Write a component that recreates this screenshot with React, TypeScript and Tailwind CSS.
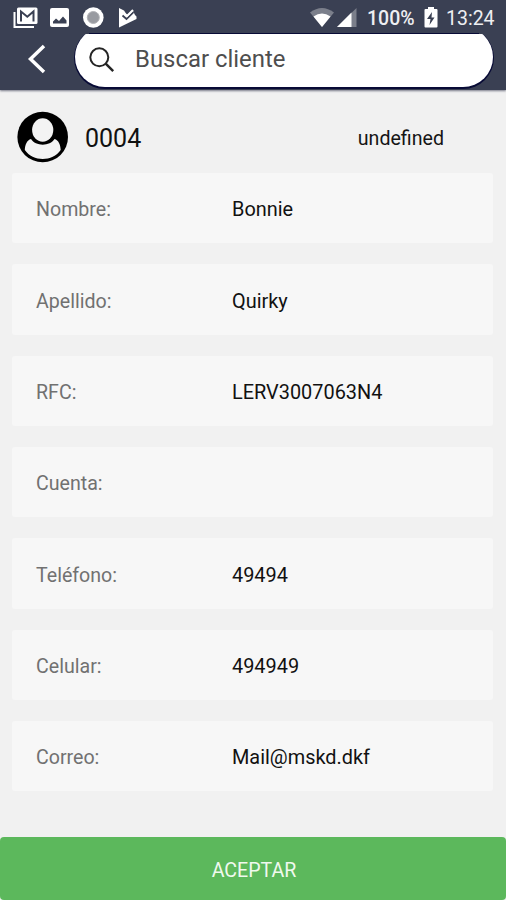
import React from "react";

const fields: { label: string; value: string }[] = [
  { label: "Nombre:", value: "Bonnie" },
  { label: "Apellido:", value: "Quirky" },
  { label: "RFC:", value: "LERV3007063N4" },
  { label: "Cuenta:", value: "" },
  { label: "Teléfono:", value: "49494" },
  { label: "Celular:", value: "494949" },
  { label: "Correo:", value: "Mail@mskd.dkf" },
];

function StatusBar() {
  return (
    <div className="flex h-[33px] items-center pt-[2px] text-[#eeeff2]">
      <svg className="ml-[12px] h-[24px] w-[28px]" viewBox="0 0 28 24" fill="none">
        <path d="M2.500 6v15H22" stroke="#fff" strokeWidth="2" />
        <rect x="5" y="1.500" width="20.500" height="16.500" rx="1.500" fill="#fff" />
        <path d="M9 15.500V5.500l6.300 5.200L21.500 5.500v10" stroke="#3a4053" strokeWidth="2" />
      </svg>
      <svg className="ml-[8px] h-[24px] w-[24px]" viewBox="0 0 24 24">
        <rect x="2" y="2" width="19" height="19" rx="2" fill="#fff" />
        <path d="M5 17.500v-2l3-3 3 2.500 4-4.500 3.500 4v3z" fill="#3a4053" />
      </svg>
      <svg className="ml-[9px] h-[24px] w-[24px]" viewBox="0 0 24 24">
        <circle cx="12.300" cy="11.500" r="10.300" fill="#fff" />
        <circle cx="12.300" cy="11.500" r="6" fill="#999ba1" stroke="#b2b3b7" />
      </svg>
      <svg className="ml-[12px] h-[24px] w-[22px]" viewBox="0 0 22 24">
        <path d="M2 2l5 2.500 3 4.500 6-4 2 4 1.500 1.500v2.500L2 21.500z" fill="#fff" />
        <path d="M5.500 9.500l4 3.500 7-7" fill="none" stroke="#3a4053" strokeWidth="1.800" />
        <path d="M8 8l2 2L16 4" fill="none" stroke="#fff" strokeWidth="2" />
      </svg>
      <svg className="ml-auto h-[24px] w-[26px]" viewBox="0 0 26 24">
        <path d="M1 6.500Q13-2.500 25 6.500L13 21z" fill="#7b7f8b" />
        <path d="M4.500 10.500Q13 4.500 21.500 10.500L13 21z" fill="#fff" />
      </svg>
      <svg className="ml-[2px] h-[24px] w-[20px]" viewBox="0 0 20 24">
        <path d="M19.500 2v19H0z" fill="#7b7f8b" />
        <path d="M14.500 6.500V21H0z" fill="#fff" />
      </svg>
      <span className="ml-[10px] w-[49px] pt-[2px] text-[19.500px] font-medium whitespace-nowrap">100%</span>
      <svg className="ml-[8px] h-[24px] w-[14px]" viewBox="0 0 14 24">
        <path d="M4 1h6v2h2.500q1 0 1 1v16.500q0 1-1 1h-11q-1 0-1-1V4q0-1 1-1H4z" fill="#fff" />
        <path d="M8 6l-5 7h3.500l-1 6 5-7.500H7.500z" fill="#3a4053" />
      </svg>
      <span className="mr-[11px] ml-[8px] w-[49px] pt-[2px] text-[19.500px] whitespace-nowrap">13:24</span>
    </div>
  );
}

function SearchBar() {
  return (
    <div className="flex h-[57px] items-start overflow-hidden">
      <button className="ml-[26px] flex h-[50px] w-[22px] items-center" aria-label="Atrás">
        <svg className="h-[32px] w-[22px]" viewBox="0 0 22 32" fill="none">
          <path d="M18 4L4.500 17l13.500 13" stroke="#fff" strokeWidth="3.500" />
        </svg>
      </button>
      <div className="ml-[27px] h-[57px] w-[418px] bg-[linear-gradient(#080b36,#080b36)] bg-[length:390px_1px] bg-[position:14px_0] bg-no-repeat">
        <div className="h-[60px] pt-[1px]">
          <div className="mt-[-7px] flex h-[60px] items-center rounded-full bg-white shadow-[0_1px_0_1px_#080b36] [clip-path:inset(7px_-2px_-3px_-2px)]">
            <svg className="mt-[5px] ml-[13px] h-[28px] w-[28px]" viewBox="0 0 28 28" fill="none" stroke="#252525" strokeWidth="2">
              <circle cx="11.300" cy="11.300" r="9" />
              <path d="M17.700 17.700l7.500 7.500" strokeWidth="2.500" />
            </svg>
            <span className="mt-[5px] ml-[19px] text-[23.900px] text-[#4e4e4e]">Buscar cliente</span>
          </div>
        </div>
      </div>
    </div>
  );
}

export default function App() {
  return (
    <div className="flex h-[900px] w-[506px] flex-col bg-[#f1f1f1] font-['Roboto',sans-serif]">
      <header className="z-10 h-[90px] shrink-0 bg-[#3a4053] shadow-[0_1px_2px_#777988]">
        <StatusBar />
        <SearchBar />
      </header>

      <section className="flex h-[83px] shrink-0 items-center pt-[11px] pr-[62px] pl-[17px]">
        <svg className="h-[52px] w-[52px]" viewBox="0 0 52 52">
          <circle cx="25.700" cy="26" r="25.300" fill="#000" />
          <ellipse cx="25.700" cy="19" rx="10.600" ry="11.800" fill="#f3f3f3" />
          <path d="M14 28C18.500 35.500 33 35.500 37.500 28C41.500 29 43.500 34 43.700 39C35.500 51 16 51 7.800 39C8 34 10 29 14 28z" fill="#f3f3f3" />
        </svg>
        <span className="mt-[4px] ml-[16px] text-[25px] text-[#111]">0004</span>
        <span className="mt-[4px] ml-auto text-[19.600px] text-[#151515]">undefined</span>
      </section>

      <main className="flex flex-col gap-[21px] pr-[13px] pl-[12px]">
        {fields.map((field) => (
          <div key={field.label} className="flex h-[70.330px] items-center rounded-[3px] bg-[#f7f7f7] pt-[4px] pl-[24px]">
            <span className="w-[196px] text-[19.600px] text-[#717171]">{field.label}</span>
            <span className="text-[19.900px] text-[#111]">{field.value}</span>
          </div>
        ))}
      </main>

      <button className="mt-auto flex h-[63px] w-full shrink-0 items-center justify-center rounded-[4px] bg-[#5cb85c] pt-[4px] pl-[2px] text-[19.600px] text-[#f0f9ee]">
        ACEPTAR
      </button>
    </div>
  );
}
